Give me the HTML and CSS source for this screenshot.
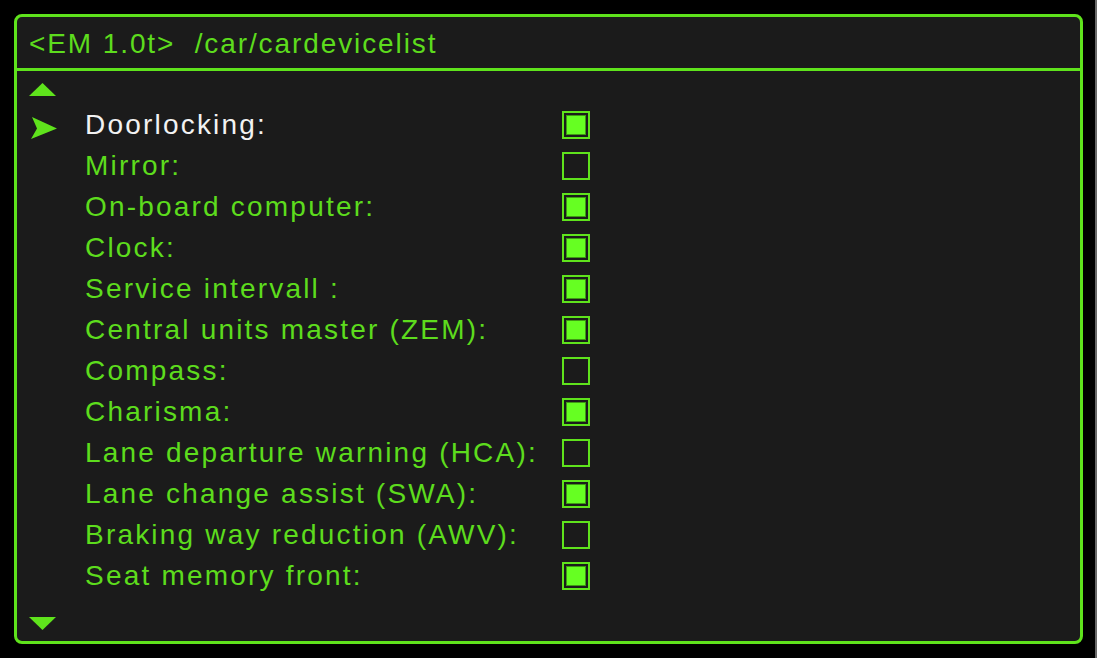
FILE: index.html
```html
<!DOCTYPE html>
<html>
<head>
<meta charset="utf-8">
<link rel="stylesheet" href="styles.css">
</head>
<body>
<div class="panel">
  <div class="header">&lt;EM 1.0t&gt;&nbsp; /car/cardevicelist</div>
  <div class="body">
    <svg class="arrow-up" width="27" height="13" viewBox="0 0 27 13"><polygon points="0,13 13.5,0 27,13" fill="#5fe31c"/></svg>
    <ul class="list">
      <li class="row selected">
        <svg class="pointer" width="26" height="22" viewBox="0 0 26 22"><polygon points="1,0 26,11.5 0,22 6,11.5" fill="#5fe31c"/></svg>
        <span class="label">Doorlocking:</span><span class="box checked"></span>
      </li>
      <li class="row"><span class="label">Mirror:</span><span class="box"></span></li>
      <li class="row"><span class="label">On-board computer:</span><span class="box checked"></span></li>
      <li class="row"><span class="label">Clock:</span><span class="box checked"></span></li>
      <li class="row"><span class="label">Service intervall :</span><span class="box checked"></span></li>
      <li class="row"><span class="label">Central units master (ZEM):</span><span class="box checked"></span></li>
      <li class="row"><span class="label">Compass:</span><span class="box"></span></li>
      <li class="row"><span class="label">Charisma:</span><span class="box checked"></span></li>
      <li class="row"><span class="label">Lane departure warning (HCA):</span><span class="box"></span></li>
      <li class="row"><span class="label">Lane change assist (SWA):</span><span class="box checked"></span></li>
      <li class="row"><span class="label">Braking way reduction (AWV):</span><span class="box"></span></li>
      <li class="row"><span class="label">Seat memory front:</span><span class="box checked"></span></li>
    </ul>
    <svg class="arrow-down" width="27" height="13" viewBox="0 0 27 13"><polygon points="0,0 27,0 13.5,13" fill="#5fe31c"/></svg>
  </div>
</div>
</body>
</html>
```

FILE: styles.css
```css
html, body {
  margin: 0;
  padding: 0;
}
body {
  width: 1097px;
  height: 658px;
  background: #000;
  box-sizing: border-box;
  padding: 14px 0 0 14px;
  box-shadow: inset -2px 0 0 #6a6a6a;
  font-family: "Liberation Sans", Arial, sans-serif;
  color: #5ddc1d;
}
.panel {
  width: 1069px;
  height: 630px;
  box-sizing: border-box;
  border: 3px solid #5fe31c;
  border-radius: 8px;
  background: #1b1b1b;
  display: flex;
  flex-direction: column;
}
.header {
  height: 51px;
  line-height: 53px;
  border-bottom: 3px solid #5fe31c;
  padding-left: 12px;
  font-size: 28px;
  letter-spacing: 1.9px;
  white-space: pre;
}
.body {
  display: flex;
  flex-direction: column;
  padding: 12px 0 0 12px;
}
.arrow-up, .arrow-down {
  display: block;
}
.list {
  list-style: none;
  margin: 8px 0 0 0;
  padding: 0;
}
.row {
  height: 41px;
  display: flex;
  align-items: center;
  padding-left: 56px;
  position: relative;
}
.pointer {
  position: absolute;
  left: 2px;
  top: 13px;
}
.label {
  width: 477px;
  font-size: 28px;
  line-height: 41px;
  letter-spacing: 2.2px;
  white-space: nowrap;
}
.row.selected .label {
  color: #f2f2f2;
}
.box {
  width: 28px;
  height: 28px;
  box-sizing: border-box;
  border: 2px solid #5fe31c;
  padding: 2px;
}
.box.checked::before {
  content: "";
  display: block;
  width: 100%;
  height: 100%;
  box-sizing: border-box;
  background: #66ff22;
  border: 1px solid #3f9a14;
}
.arrow-down {
  margin-top: 21px;
}
```
